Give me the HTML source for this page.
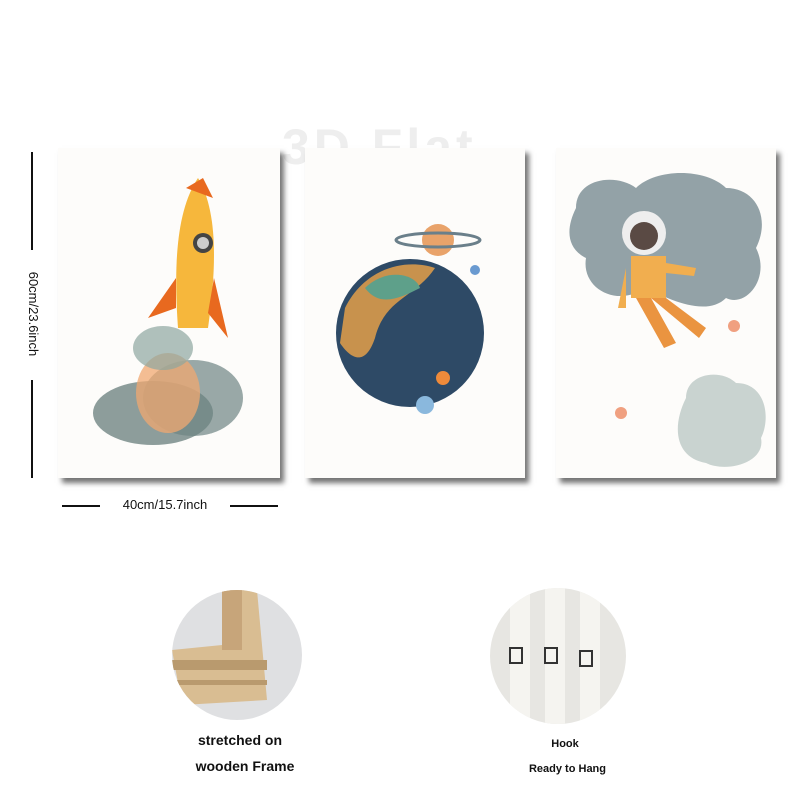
<!DOCTYPE html>
<html><head><meta charset="utf-8"><style>
body{margin:0;width:800px;height:800px;background:#fff;position:relative;overflow:hidden;font-family:"Liberation Sans",sans-serif}
.a{position:absolute}
.p{position:absolute;background:#fdfcfa;box-shadow:4px 5px 5px rgba(0,0,0,.55)}
</style></head><body>
<div class="a" style="left:282px;top:118px;font-size:50px;color:#eeeeee;letter-spacing:4px;font-weight:bold">3D Flat</div>

<div class="p" style="left:58px;top:148px;width:222px;height:330px">
<svg width="222" height="330">
<ellipse cx="95" cy="265" rx="60" ry="32" fill="#5c7572" opacity=".7"/>
<ellipse cx="135" cy="250" rx="50" ry="38" fill="#6d8583" opacity=".7"/>
<ellipse cx="110" cy="245" rx="32" ry="40" fill="#f0a870" opacity=".75"/>
<ellipse cx="105" cy="200" rx="30" ry="22" fill="#8da7a0" opacity=".7"/>
<path d="M140 30 C120 60 115 110 120 180 L150 180 C160 110 158 60 140 30Z" fill="#f6b73c"/>
<path d="M118 130 L90 170 L118 160Z M156 130 L170 190 L150 165Z" fill="#e8691f"/>
<circle cx="145" cy="95" r="10" fill="#444"/><circle cx="145" cy="95" r="6" fill="#ccc"/>
<path d="M128 40 L145 30 L155 50Z" fill="#e8691f"/>
</svg></div>

<div class="p" style="left:305px;top:148px;width:220px;height:330px">
<svg width="220" height="330">
<circle cx="105" cy="185" r="74" fill="#2e4a66"/>
<path d="M40 160 C60 120 100 110 130 120 C110 150 80 150 70 190 C60 220 45 210 35 195Z" fill="#d99a4a" opacity=".9"/>
<path d="M60 140 C80 120 110 125 115 140 C95 150 75 160 60 140Z" fill="#5ea08a"/>
<circle cx="133" cy="92" r="16" fill="#e9a36a"/>
<ellipse cx="133" cy="92" rx="42" ry="7" fill="none" stroke="#6a7f8a" stroke-width="3"/>
<circle cx="138" cy="230" r="7" fill="#ee8a3a"/><circle cx="120" cy="257" r="9" fill="#8ab8dd"/><circle cx="170" cy="122" r="5" fill="#6a9ad0"/>
</svg></div>

<div class="p" style="left:556px;top:148px;width:220px;height:330px">
<svg width="220" height="330">
<path d="M20 60 C20 30 60 25 80 40 C100 20 150 20 170 40 C200 40 215 70 200 100 C215 130 190 160 170 150 C150 170 110 150 90 140 C60 160 25 140 30 110 C10 100 10 80 20 60Z" fill="#4d6570" opacity=".6"/>
<path d="M130 250 C130 225 165 220 180 235 C210 235 215 270 205 290 C210 315 170 325 150 315 C120 310 115 280 130 250Z" fill="#9fb0ad" opacity=".55"/>
<circle cx="88" cy="85" r="22" fill="#eee"/><circle cx="88" cy="88" r="14" fill="#5a4a44"/>
<path d="M75 108 L110 108 L110 150 L75 150Z" fill="#f1ae4f"/>
<path d="M70 120 L62 160 L70 160Z M110 115 L140 120 L138 128 L110 125Z" fill="#f1ae4f"/>
<path d="M80 150 L95 150 L120 195 L108 200Z M95 150 L110 150 L150 180 L143 190Z" fill="#ea9440"/>
<circle cx="178" cy="178" r="6" fill="#f0a080"/><circle cx="65" cy="265" r="6" fill="#f0a080"/>
</svg></div>

<div class="a" style="left:31px;top:152px;width:2px;height:326px;background:#111"></div>
<div class="a" style="left:22px;top:250px;width:22px;height:130px;background:#fff"></div>
<div class="a" style="left:-32px;top:306px;width:130px;height:16px;transform:rotate(90deg);font-size:13px;text-align:center;color:#111">60cm/23.6inch</div>
<div class="a" style="left:62px;top:505px;width:216px;height:2px;background:#111"></div>
<div class="a" style="left:100px;top:497px;width:130px;height:18px;background:#fff;font-size:13px;text-align:center;color:#111">40cm/15.7inch</div>

<div class="a" style="left:172px;top:590px;width:130px;height:130px;border-radius:50%;background:#dfe0e2;overflow:hidden">
<svg width="130" height="130"><path d="M50 0 L85 0 L95 110 L10 115 L0 60 L50 55Z" fill="#d9bd92"/><path d="M50 0 L70 0 L70 60 L50 60Z" fill="#c7a57a"/><path d="M0 70 L95 70 L95 80 L0 80Z M0 90 L95 90 L95 95 L0 95Z" fill="#b99a6e"/></svg></div>
<div class="a" style="left:490px;top:588px;width:136px;height:136px;border-radius:50%;background:#e7e6e2;overflow:hidden">
<svg width="136" height="136"><path d="M20 0 L40 0 L40 136 L20 136Z M55 0 L75 0 L75 136 L55 136Z M90 0 L110 0 L110 136 L90 136Z" fill="#f5f4f0"/>
<rect x="20" y="60" width="12" height="15" fill="none" stroke="#333" stroke-width="2"/><rect x="55" y="60" width="12" height="15" fill="none" stroke="#333" stroke-width="2"/><rect x="90" y="63" width="12" height="15" fill="none" stroke="#333" stroke-width="2"/></svg></div>

<div class="a" style="left:170px;top:732px;width:140px;text-align:center;font-size:14px;font-weight:bold;color:#111">stretched on</div>
<div class="a" style="left:170px;top:758px;width:150px;text-align:center;font-size:14px;font-weight:bold;color:#111">wooden Frame</div>
<div class="a" style="left:515px;top:738px;width:100px;text-align:center;font-size:11px;font-weight:bold;color:#111">Hook</div>
<div class="a" style="left:510px;top:763px;width:115px;text-align:center;font-size:11px;font-weight:bold;color:#111">Ready to Hang</div>
</body></html>
